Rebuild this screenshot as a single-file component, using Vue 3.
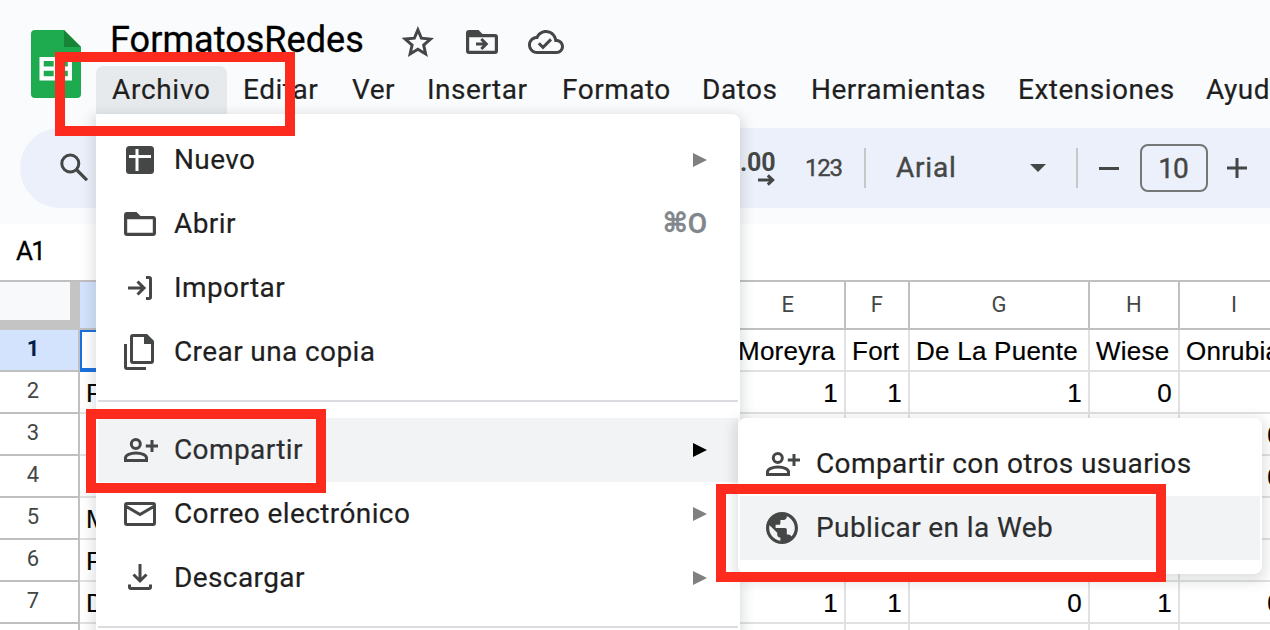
<script setup>
const menubar = ['Archivo', 'Editar', 'Ver', 'Insertar', 'Formato', 'Datos', 'Herramientas', 'Extensiones', 'Ayuda']

const fileMenu = [
  [
    { icon: 'new', label: 'Nuevo', sub: true },
    { icon: 'open', label: 'Abrir', key: true },
    { icon: 'import', label: 'Importar' },
    { icon: 'copy', label: 'Crear una copia' },
  ],
  [
    { icon: 'share', label: 'Compartir', sub: true, active: true },
    { icon: 'mail', label: 'Correo electrónico', sub: true },
    { icon: 'download', label: 'Descargar', sub: true },
  ],
]

const columns = ['A', 'E', 'F', 'G', 'H', 'I']
const rows = [
  ['', 'Moreyra', 'Fort', 'De La Puente', 'Wiese', 'Onrubia'],
  ['F', 1, 1, 1, 0, ''],
  ['', '', '', '', '', 0],
  ['', '', '', '', '', 0],
  ['M', '', '', '', '', ''],
  ['F', '', '', '', '', ''],
  ['D', 1, 1, 0, 1, 0],
  ['', '', '', '', '', ''],
]
</script>

<template>
  <div class="page">
    <header class="head">
      <svg class="logo" viewBox="0 0 50 68">
        <path fill="#1eab50" d="M4 0h29l17 17v47a4 4 0 0 1-4 4H4a4 4 0 0 1-4-4V4a4 4 0 0 1 4-4z" />
        <path fill="#188536" d="M33 0l17 17H33z" />
        <path fill="#fff" fill-rule="evenodd" d="M8.500 27H41v23.500H8.500zM12.700 31v5.500h10V31zM26.800 31v5.500h10V31zM12.700 40.700v5.500h10v-5.500zM26.800 40.700v5.500h10v-5.500z" />
      </svg>
      <div class="head-main">
        <div class="title-row">
          <h1 class="title">FormatosRedes</h1>
          <svg class="t-star" viewBox="0 0 32 32"><path fill="none" stroke="#444746" stroke-width="2.500" d="M16 5.200L19 12.300 26.700 13 20.900 18.100 22.600 25.600 16 21.600 9.400 25.600 11.100 18.100 5.300 13 13 12.300z" transform="translate(-3 -2.300) scale(1.180)" /></svg>
          <svg class="t-move" viewBox="0 0 32 24">
            <path fill="#444746" fill-rule="evenodd" d="M3 0h9.500l4 4H29a3 3 0 0 1 3 3v14a3 3 0 0 1-3 3H3a3 3 0 0 1-3-3V3a3 3 0 0 1 3-3zM3.200 7.200v13.600h25.600V7.200z" />
            <path fill="none" stroke="#444746" stroke-width="3" d="M10 14h9.500M15.300 9l5 5-5 5" />
          </svg>
          <svg class="t-cloud" viewBox="0 4 24 16"><path fill="#444746" d="M19.350 10.040C18.670 6.590 15.640 4 12 4 9.110 4 6.600 5.640 5.350 8.040 2.340 8.360 0 10.910 0 14c0 3.310 2.690 6 6 6h13c2.760 0 5-2.240 5-5 0-2.640-2.050-4.780-4.650-4.960zM19 18H6c-2.210 0-4-1.790-4-4 0-2.050 1.530-3.760 3.560-3.970l1.070-.11.5-.95C8.080 7.140 9.940 6 12 6c2.620 0 4.880 1.860 5.390 4.430l.3 1.500 1.530.11c1.560.1 2.780 1.410 2.780 2.960 0 1.650-1.350 3-3 3zm-9-3.820l-2.090-2.090L6.500 13.500 10 17l6.010-6.010-1.410-1.410z" /></svg>
        </div>
        <nav class="menubar">
          <span v-for="(m, i) in menubar" :key="m" class="mb" :class="{ open: i === 0 }">{{ m }}</span>
        </nav>
      </div>
    </header>

    <div class="toolbar">
      <svg class="search" viewBox="0 0 28 28"><circle cx="10.300" cy="10.500" r="8.500" fill="none" stroke="#444746" stroke-width="3" /><path stroke="#444746" stroke-width="3.200" d="M16.300 16.500L27 27.200" /></svg>
      <div class="tools">
        <div class="decimals"><span>.00</span>
          <svg viewBox="0 0 18 12"><path fill="none" stroke="#444746" stroke-width="3" d="M0 6h14M9.800 1.300l4.900 4.700-4.900 4.700" /></svg>
        </div>
        <span class="fmt">123</span>
        <i class="vr"></i>
        <span class="font">Arial</span>
        <svg class="caret" viewBox="0 0 16 8"><path fill="#444746" d="M0 0h16L8 8z" /></svg>
        <i class="vr"></i>
        <i class="minus"></i>
        <span class="size">10</span>
        <svg class="plus" viewBox="0 0 20 20"><path stroke="#444746" stroke-width="3" d="M0 10h20M10 0v20" /></svg>
      </div>
    </div>

    <div class="namebox">A1</div>

    <div class="sheet">
      <div class="row colhead">
        <div class="rh corner"></div>
        <div v-for="c in columns" :key="c" class="cell" :class="'c' + c">{{ c === 'A' ? '' : c }}</div>
      </div>
      <div v-for="(r, i) in rows" :key="i" class="row" :class="{ first: i === 0 }">
        <div class="rh">{{ i + 1 }}</div>
        <div v-for="(v, j) in r" :key="j" class="cell" :class="{ num: typeof v === 'number', selected: i === 0 && j === 0 }">{{ v }}</div>
      </div>
    </div>

    <div class="menu file-menu">
      <template v-for="(group, g) in fileMenu" :key="g">
        <div v-for="it in group" :key="it.label" class="item" :class="{ active: it.active }">
          <svg class="ico" viewBox="0 0 40 40">
            <template v-if="it.icon === 'new'">
              <rect x="6" y="6" width="28" height="28" rx="3.500" fill="#444746" />
              <path stroke="#fff" stroke-width="3" d="M17 9v22M9 16.500h22" />
            </template>
            <path v-else-if="it.icon === 'open'" fill="#444746" fill-rule="evenodd" d="M7 8h9.500l4 4H33a3 3 0 0 1 3 3v14a3 3 0 0 1-3 3H7a3 3 0 0 1-3-3V11a3 3 0 0 1 3-3zM7.200 15.200v13.600h25.600V15.200z" />
            <path v-else-if="it.icon === 'import'" fill="none" stroke="#444746" stroke-width="3" d="M8 20h16M17.500 13.500l6.500 6.500-6.500 6.500M26 9.500h3a1.500 1.500 0 0 1 1.500 1.500v18a1.500 1.500 0 0 1-1.500 1.500h-3" />
            <template v-else-if="it.icon === 'copy'">
              <path fill="none" stroke="#444746" stroke-width="3" d="M13 3.500h13l6.500 6.500v19a1.500 1.500 0 0 1-1.500 1.500H13a1.500 1.500 0 0 1-1.500-1.500V5A1.500 1.500 0 0 1 13 3.500zM5.500 12v23a1.500 1.500 0 0 0 1.500 1.500h19" />
              <path fill="#444746" d="M24 2h3l7 7v3H24z" />
            </template>
            <path v-else-if="it.icon === 'share'" fill="none" stroke="#444746" stroke-width="3" d="M15.800 9.500a4.500 4.500 0 1 1 0 9 4.500 4.500 0 0 1 0-9zM5.500 30.500v-2.500c0-3 5-5 10.500-5s10.500 2 10.500 5v2.500zM25.800 16H38M32 9.900v12.200" />
            <path v-else-if="it.icon === 'mail'" fill="none" stroke="#444746" stroke-width="3" d="M7 9.500h26a1.500 1.500 0 0 1 1.500 1.500v18a1.500 1.500 0 0 1-1.500 1.500H7a1.500 1.500 0 0 1-1.500-1.500V11A1.500 1.500 0 0 1 7 9.500zM5.500 12L20 20.500 34.500 12" />
            <path v-else fill="none" stroke="#444746" stroke-width="3" d="M20 6v17M13.500 16.500L20 23l6.500-6.500M9.500 26.500V29a1.500 1.500 0 0 0 1.500 1.500h18a1.500 1.500 0 0 0 1.500-1.500v-2.500" />
          </svg>
          <span class="label">{{ it.label }}</span>
          <span v-if="it.key" class="key"><b>⌘</b>O</span>
          <svg v-if="it.sub" class="tri" viewBox="0 0 14 14"><path d="M0 0l14 7-14 7z" /></svg>
        </div>
        <div class="sep"></div>
      </template>
    </div>

    <div class="menu sub-menu">
      <div class="item">
        <svg class="ico" viewBox="0 0 40 40"><path fill="none" stroke="#444746" stroke-width="3" d="M15.800 9.500a4.500 4.500 0 1 1 0 9 4.500 4.500 0 0 1 0-9zM5.500 30.500v-2.500c0-3 5-5 10.500-5s10.500 2 10.500 5v2.500zM25.800 16H38M32 9.900v12.200" /></svg>
        <span class="label">Compartir con otros usuarios</span>
      </div>
      <div class="item active">
        <svg class="ico" viewBox="-0.500 -0.500 25 25"><path fill="#444746" d="M12 2C6.480 2 2 6.480 2 12s4.480 10 10 10 10-4.480 10-10S17.520 2 12 2zm-1 17.930c-3.950-.49-7-3.850-7-7.930 0-.62.080-1.210.21-1.790L9 15v1c0 1.100.9 2 2 2v1.930zm6.900-2.540c-.26-.81-1-1.390-1.900-1.390h-1v-3c0-.55-.45-1-1-1H8v-2h2c.55 0 1-.45 1-1V7h2c1.100 0 2-.9 2-2v-.41c2.930 1.190 5 4.060 5 7.410 0 2.080-.8 3.970-2.100 5.390z" /></svg>
        <span class="label">Publicar en la Web</span>
      </div>
    </div>

    <div class="mark mark-file"></div>
    <div class="mark mark-share"></div>
    <div class="mark mark-publish"></div>
  </div>
</template>

<style>
html, body { margin: 0; overflow: hidden; }
</style>

<style scoped>
* { box-sizing: border-box; }
.page { position: relative; width: 1270px; height: 630px; overflow: hidden; background: linear-gradient(#f9fbfd 224px, #fff 224px); font-family: Roboto, "Liberation Sans", sans-serif; color: #1f1f1f; }
.page svg { display: block; flex: none; }
.head { display: flex; height: 128px; padding-left: 31px; }
.logo { width: 50px; height: 68px; margin-top: 30px; }
.head-main { margin-left: 15px; flex: none; }
.title-row { display: flex; height: 66px; padding-left: 14px; }
.title { margin: 18px 0 0; width: 292px; font-size: 36px; line-height: 44px; font-weight: 400; color: #000; letter-spacing: .05px; white-space: nowrap; -webkit-text-stroke: .3px #000; }
.t-star { width: 32px; height: 32px; margin-top: 26px; }
.t-move { width: 32px; height: 24px; margin: 30px 0 0 32px; }
.t-cloud { width: 36px; height: 24px; margin: 30px 0 0 30px; }
.menubar { display: grid; grid-template-columns: 131px 109px 75px 135px 140px 109px 207px 188px 110px; }
.mb { height: 48px; line-height: 47px; padding-left: 16px; font-size: 28px; letter-spacing: .5px; white-space: nowrap; -webkit-text-stroke: .2px #1f1f1f; }
.mb.open { background: #e7eaed; border-radius: 8px 8px 0 0; letter-spacing: .7px; }
.toolbar { display: flex; height: 80px; margin-left: 20px; padding-left: 40px; border-radius: 40px 0 0 40px; background: #ecf0fa; color: #444746; }
.search { width: 28px; height: 28px; margin-top: 25px; }
.tools { display: flex; align-items: center; margin-left: 652px; }
.decimals { width: 40px; padding-top: 0; }
.decimals span { display: block; font-size: 25px; line-height: 24px; font-weight: 700; letter-spacing: -.2px; }
.decimals svg { width: 18px; height: 12px; margin: -1px 0 0 18px; }
.fmt { margin-left: 25px; width: 59px; font-size: 24px; letter-spacing: -1.300px; -webkit-text-stroke: .4px #444746; }
.vr { width: 2px; height: 40px; background: #c7c7c7; }
.font { margin: -2px 0 0 30px; width: 134px; font-size: 28px; letter-spacing: .8px; -webkit-text-stroke: .4px #444746; }
.caret { width: 16px; height: 8px; margin-right: 30px; }
.minus { width: 20px; height: 3px; margin-left: 21px; background: #444746; }
.size { width: 68px; height: 48px; margin-left: 21px; padding-right: 2px; border: 2px solid #747775; border-radius: 8px; text-align: center; line-height: 45px; font-size: 28px; letter-spacing: -1px; -webkit-text-stroke: .4px #444746; }
.plus { width: 20px; height: 20px; margin-left: 19px; }
.namebox { height: 72px; padding: 29px 0 0 16px; font-size: 26px; line-height: 28px; color: #000; letter-spacing: -1.800px; -webkit-text-stroke: .3px #000; }
.sheet { font-family: "Liberation Sans", Arial, sans-serif; color: #000; }
.row { display: grid; grid-template-columns: 80px 652px 114px 64px 180px 90px 110px; height: 42px; }
.rh { border-right: 2px solid #c0c0c0; border-bottom: 2px solid #c0c0c0; padding-right: 12px; text-align: center; font-size: 22px; line-height: 38px; color: #444746; font-family: Roboto, sans-serif; }
.cell { border-right: 2px solid #e1e1e1; border-bottom: 2px solid #e1e1e1; padding: 0 6px; font-size: 26px; line-height: 42px; letter-spacing: .25px; white-space: nowrap; overflow: hidden; -webkit-text-stroke: .2px #000; }
.num { text-align: right; }
.colhead { height: 50px; border-top: 2px solid #c0c0c0; }
.colhead .cell { border-color: #c0c0c0; text-align: center; font-size: 22px; line-height: 45px; color: #444746; font-family: Roboto, sans-serif; -webkit-text-stroke: 0; }
.colhead .cA { background: #d3e3fd; }
.corner { border-right: 10px solid #c4c4c4; border-bottom: 10px solid #c4c4c4; background: #f8f9fa; }
.first .rh { background: #d3e3fd; color: #041e49; font-weight: 700; }
.selected { border: 2px solid #1a6fdc; border-bottom-width: 4px; }
.menu { position: absolute; background: #fff; box-shadow: 0 4px 12px 4px rgba(60, 64, 67, .15); }
.file-menu { left: 96px; top: 114px; width: 644px; height: 560px; padding: 14px 2px 0; border-radius: 0 8px 0 0; }
.sub-menu { left: 738px; top: 418px; width: 524px; height: 156px; padding: 14px 2px; border-radius: 8px; }
.item { display: flex; align-items: center; height: 64px; padding: 0 31px 0 22px; font-size: 28px; letter-spacing: .4px; }
.item.active { background: #f1f3f4; color: #2d2e30; }
.ico { width: 40px; height: 40px; margin-right: 14px; }
.label { flex: 1; padding-bottom: 2px; white-space: nowrap; -webkit-text-stroke: .2px currentColor; }
.key { padding-bottom: 2px; color: #80868b; font-weight: 500; font-size: 28px; letter-spacing: 0; display: flex; align-items: center; -webkit-text-stroke: .4px #80868b; }
.key b { font: 700 27px/28px "DejaVu Sans", sans-serif; -webkit-text-stroke: .5px #80868b; }
.tri { width: 14px; height: 14px; margin-bottom: 1px; fill: #808080; }
.active .tri { fill: #000; }
.sep { height: 2px; margin: 16px 0; background: #dadce0; }
.mark { position: absolute; border: 10px solid #fd2b1d; }
.mark-file { left: 55px; top: 52px; width: 240px; height: 84px; }
.mark-share { left: 86px; top: 409px; width: 240px; height: 84px; }
.mark-publish { left: 716px; top: 484px; width: 450px; height: 98px; }
</style>
